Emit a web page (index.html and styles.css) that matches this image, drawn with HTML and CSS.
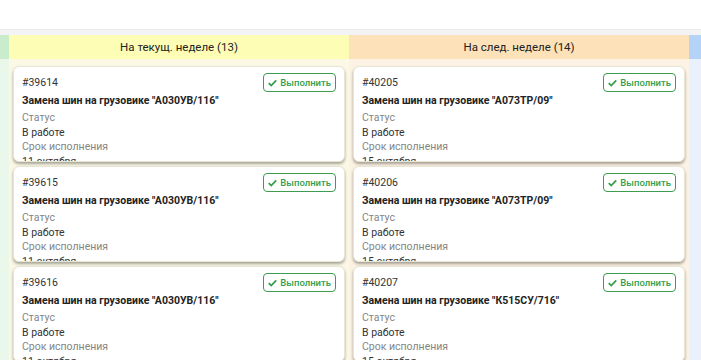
FILE: index.html
```html
<!DOCTYPE html>
<html lang="ru">
<head>
  <meta charset="UTF-8" />
  <meta name="viewport" content="width=device-width, initial-scale=1.0"/>
  <title>Задачи</title>
  <link rel="stylesheet" href="styles.css">
</head>
<body>
  <div class="topbar"></div>
  <div class="strip"></div>

  <div class="board">
    <div class="column green">
      <div class="col-head"></div>
      <div class="col-body"></div>
    </div>

    <div class="column yellow">
      <div class="col-head">На текущ. неделе (13)</div>
      <div class="col-body">
        <div class="card">
          <div class="card-top">
            <span class="num">#39614</span>
            <button class="done"><svg viewBox="0 0 12 10"><path d="M1 5.2 L4.3 8.4 L11 1.6" /></svg>Выполнить</button>
          </div>
          <div class="title">Замена шин на грузовике "А030УВ/116"</div>
          <div class="label">Статус</div>
          <div class="value">В работе</div>
          <div class="label">Срок исполнения</div>
          <div class="value">11 октября</div>
        </div>
        <div class="card">
          <div class="card-top">
            <span class="num">#39615</span>
            <button class="done"><svg viewBox="0 0 12 10"><path d="M1 5.2 L4.3 8.4 L11 1.6" /></svg>Выполнить</button>
          </div>
          <div class="title">Замена шин на грузовике "А030УВ/116"</div>
          <div class="label">Статус</div>
          <div class="value">В работе</div>
          <div class="label">Срок исполнения</div>
          <div class="value">11 октября</div>
        </div>
        <div class="card">
          <div class="card-top">
            <span class="num">#39616</span>
            <button class="done"><svg viewBox="0 0 12 10"><path d="M1 5.2 L4.3 8.4 L11 1.6" /></svg>Выполнить</button>
          </div>
          <div class="title">Замена шин на грузовике "А030УВ/116"</div>
          <div class="label">Статус</div>
          <div class="value">В работе</div>
          <div class="label">Срок исполнения</div>
          <div class="value">11 октября</div>
        </div>
      </div>
    </div>

    <div class="column orange">
      <div class="col-head">На след. неделе (14)</div>
      <div class="col-body">
        <div class="card">
          <div class="card-top">
            <span class="num">#40205</span>
            <button class="done"><svg viewBox="0 0 12 10"><path d="M1 5.2 L4.3 8.4 L11 1.6" /></svg>Выполнить</button>
          </div>
          <div class="title">Замена шин на грузовике "А073ТР/09"</div>
          <div class="label">Статус</div>
          <div class="value">В работе</div>
          <div class="label">Срок исполнения</div>
          <div class="value">15 октября</div>
        </div>
        <div class="card">
          <div class="card-top">
            <span class="num">#40206</span>
            <button class="done"><svg viewBox="0 0 12 10"><path d="M1 5.2 L4.3 8.4 L11 1.6" /></svg>Выполнить</button>
          </div>
          <div class="title">Замена шин на грузовике "А073ТР/09"</div>
          <div class="label">Статус</div>
          <div class="value">В работе</div>
          <div class="label">Срок исполнения</div>
          <div class="value">15 октября</div>
        </div>
        <div class="card">
          <div class="card-top">
            <span class="num">#40207</span>
            <button class="done"><svg viewBox="0 0 12 10"><path d="M1 5.2 L4.3 8.4 L11 1.6" /></svg>Выполнить</button>
          </div>
          <div class="title">Замена шин на грузовике "К515СУ/716"</div>
          <div class="label">Статус</div>
          <div class="value">В работе</div>
          <div class="label">Срок исполнения</div>
          <div class="value">15 октября</div>
        </div>
      </div>
    </div>

    <div class="column blue">
      <div class="col-head"></div>
      <div class="col-body"></div>
    </div>
  </div>
</body>
</html>
```

FILE: styles.css
```css
body {
  margin: 0;
  font-family: Roboto, "Noto Sans", sans-serif;
  font-size: 10.5px;
  color: #333;
  background: #fff;
  overflow: hidden;
}

.topbar {
  height: 29px;
  background: #fff;
}

.strip {
  height: 6px;
  background: #f3f3f5;
  border-top: 1px solid #ececef;
  box-sizing: border-box;
}

.board {
  display: grid;
  grid-template-columns: 9px 340px 340px 1fr;
  height: 325px;
}

.col-head {
  height: 24px;
  line-height: 25px;
  text-align: center;
  font-size: 11.5px;
  color: #222;
}

.col-body {
  height: 100%;
  padding: 7px 4px 0;
  display: flex;
  flex-direction: column;
  gap: 4px;
}

.green .col-head { background: #c9eccd; }
.green .col-body { background: #eaf8ec; }

.yellow .col-head { background: #fefdb6; }
.yellow .col-body { background: #fbf9e6; }

.orange .col-head { background: #fde1b8; }
.orange .col-body { background: #fdf3e4; }

.blue .col-head { background: #b5d3f8; }
.blue .col-body { background: #e9f2fc; }

.card {
  height: 96px;
  flex-shrink: 0;
  box-sizing: border-box;
  padding: 8px 8px 0;
  background: #fff;
  border: 1px solid #e9e5d3;
  border-radius: 6px;
  box-shadow: 0 2px 3px rgba(0, 0, 0, 0.35);
  overflow: hidden;
}

.card-top {
  display: flex;
  justify-content: space-between;
  align-items: center;
  height: 15px;
  margin-bottom: 3px;
}

.num {
  line-height: 15px;
  color: #333;
}

.done {
  display: flex;
  align-items: center;
  gap: 3px;
  height: 19px;
  padding: 0 4px;
  font-family: inherit;
  font-size: 9.5px;
  font-weight: 500;
  color: #33a04b;
  background: #fff;
  border: 1px solid #3c9d50;
  border-radius: 4px;
}

.done svg {
  width: 9px;
  height: 8px;
  fill: none;
  stroke: #33a04b;
  stroke-width: 2.4;
}

.title {
  font-weight: bold;
  line-height: 15px;
  margin-bottom: 3px;
  color: #222;
}

.label {
  line-height: 14.5px;
  color: #858585;
}

.value {
  line-height: 14.5px;
  color: #333;
}
```
